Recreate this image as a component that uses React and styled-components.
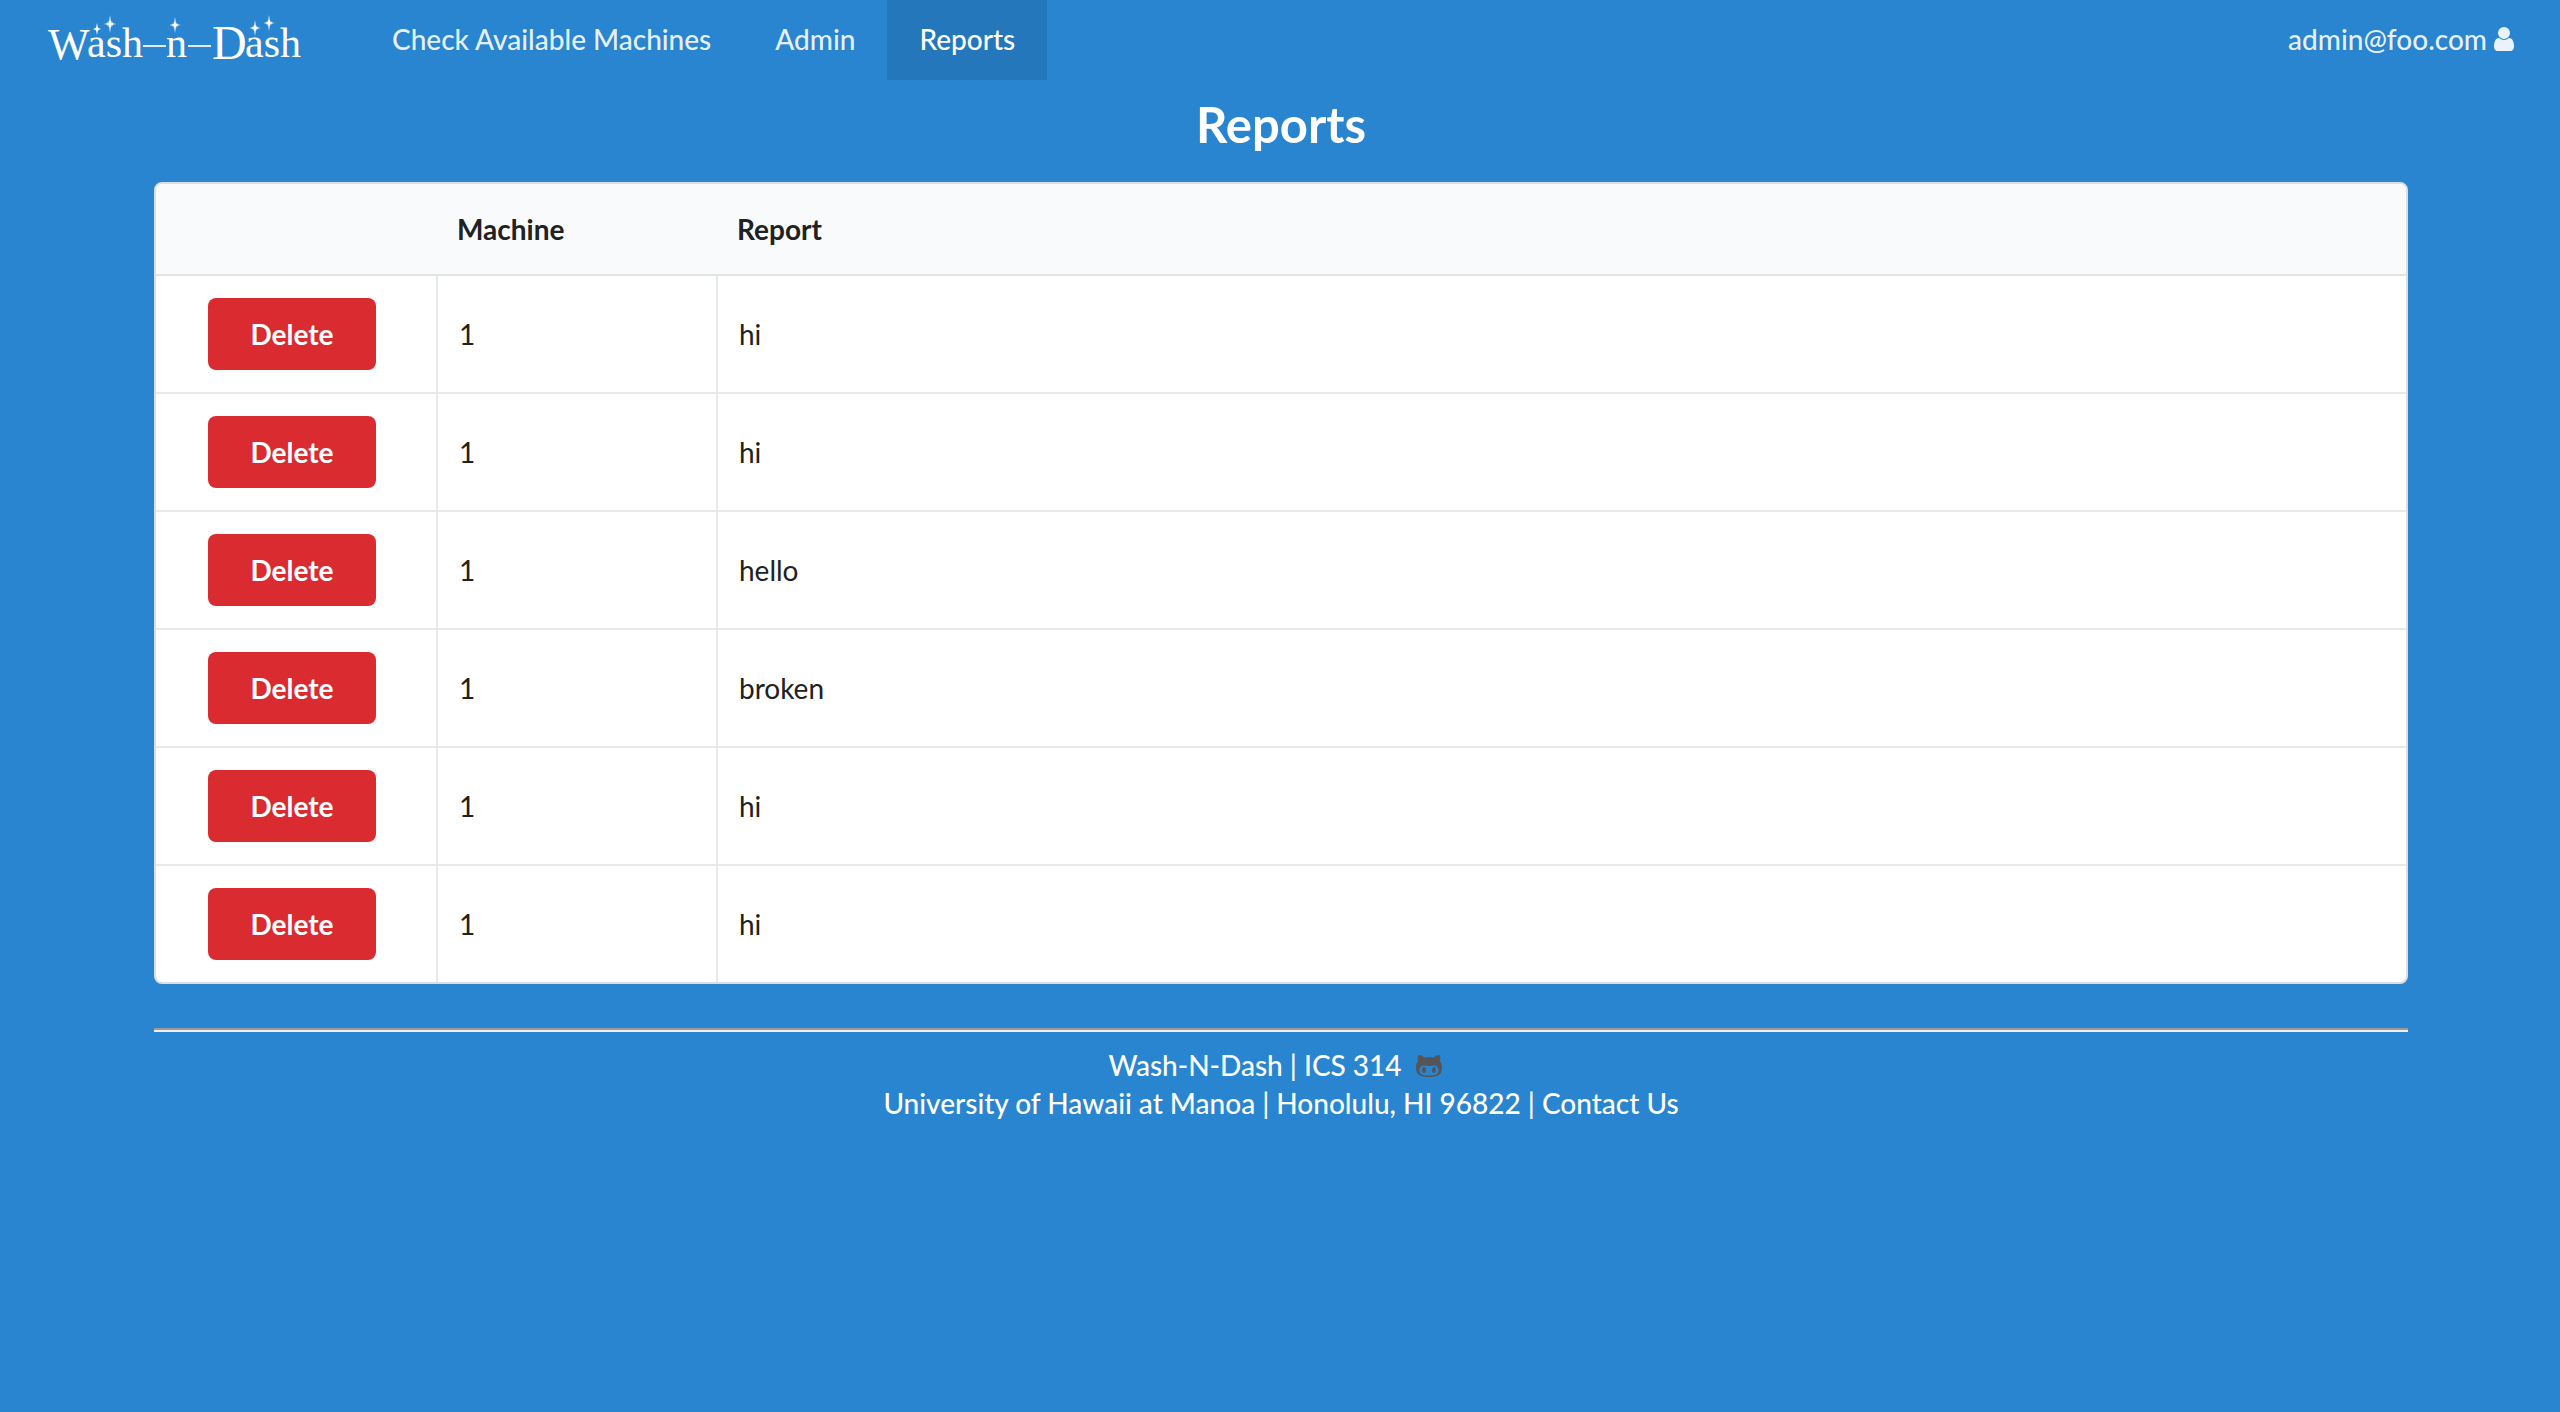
import React from "react";
import styled, { createGlobalStyle } from "styled-components";

const GlobalStyle = createGlobalStyle`
  *, *::before, *::after { box-sizing: border-box; }
  body {
    margin: 0;
    min-height: 100vh;
    background: #2985d0;
    color: #202122;
    font-family: Lato, "Liberation Sans", sans-serif;
    font-size: 28px;
    line-height: 40px;
  }
`;

const NavBar = styled.nav`
  display: flex;
  align-items: stretch;
  height: 80px;
  padding: 0 46px;
`;

const Brand = styled.a`
  display: flex;
  margin-right: 56px;
`;

const LogoSvg = styled.svg`
  display: block;
  width: 258px;
  height: 80px;
  fill: #fff;
`;

const LogoText = styled.text`
  font-family: "Liberation Serif", serif;
  font-size: 42px;
`;

const LogoCapital = styled.tspan`
  font-size: ${(p) => p.$size}px;
`;

const NavItem = styled.a`
  display: flex;
  align-items: center;
  padding: 0 32px 2px;
  color: ${(p) => (p.$active ? "#fff" : "rgba(255, 255, 255, 0.9)")};
  background: ${(p) => (p.$active ? "#2477bb" : "transparent")};
  font-weight: 500;
  text-decoration: none;
`;

const UserMenu = styled.button`
  display: flex;
  align-items: center;
  gap: 7px;
  margin-left: auto;
  padding: 0 0 2px;
  border: 0;
  background: none;
  color: rgba(255, 255, 255, 0.9);
  font: inherit;
  font-weight: 500;
  cursor: pointer;
`;

const Icon = styled.svg`
  display: block;
  width: ${(p) => p.$width}px;
  height: 28px;
  fill: currentColor;
`;

const Container = styled.div`
  padding: 0 152px 0 154px;
`;

const Title = styled.h1`
  margin: 0;
  padding: 14px 0 28px;
  color: #fff;
  font-size: 49px;
  line-height: 60px;
  text-align: center;
`;

const Table = styled.table`
  width: 100%;
  table-layout: fixed;
  border: 2px solid #dededf;
  border-radius: 8px;
  border-collapse: separate;
  border-spacing: 0;
  background: #fff;
  text-align: left;
`;

const HeadCell = styled.th`
  width: ${(p) => (p.$narrow ? "280px" : "auto")};
  height: 92px;
  padding: 0 21px;
  background: #f9fafb;
  border-bottom: 2px solid #e1e4e4;
  font-weight: 700;
  &:first-child { border-top-left-radius: 6px; }
  &:last-child { border-top-right-radius: 6px; }
`;

const Cell = styled.td`
  padding: 22px 21px;
  border-left: 2px solid #e7e8e8;
  &:first-child { border-left: 0; }
  tr:not(:last-child) > & { border-bottom: 2px solid #e7e8e8; }
`;

const ActionBox = styled.div`
  display: flex;
  justify-content: center;
  padding-right: 8px;
`;

const DeleteButton = styled.button`
  width: 168px;
  height: 72px;
  padding: 0;
  border: 0;
  border-radius: 8px;
  background: #da2b30;
  color: #fff;
  font: inherit;
  font-weight: 700;
  cursor: pointer;
`;

const Divider = styled.hr`
  margin: 44px 0 14px;
  border: 0;
  border-top: 2px solid #999;
  border-bottom: 2px solid #eee;
`;

const Footer = styled.footer`
  color: #fff;
  font-weight: 500;
  line-height: 38px;
`;

const FooterLine = styled.div`
  display: flex;
  align-items: center;
  justify-content: center;
`;

const FooterText = styled.span`
  white-space: pre;
`;

const FooterLink = styled.a`
  color: ${(p) => (p.$dark ? "#555" : "#fff")};
  margin: ${(p) => (p.$dark ? "0 12px 0 14px" : "0")};
  text-decoration: none;
`;

const reports = ["hi", "hi", "hello", "broken", "hi", "hi"];

const sparkles = [
  { x: 51, y: 29, r: 6 },
  { x: 64, y: 24, r: 9 },
  { x: 129, y: 25, r: 8 },
  { x: 209, y: 28, r: 8 },
  { x: 223, y: 23, r: 8 },
];

function Sparkle({ x, y, r }) {
  return (
    <g>
      <path
        d={`M${x} ${y - r}L${x + 1} ${y - 1}L${x + r * 0.7} ${y}L${x + 1} ${y + 1}L${x} ${y + r}L${x - 1} ${y + 1}L${x - r * 0.7} ${y}L${x - 1} ${y - 1}Z`}
      />
      <circle cx={x} cy={y} r={r * 0.35} opacity="0.5" />
    </g>
  );
}

function Logo() {
  return (
    <LogoSvg viewBox="0 0 258 80" role="img" aria-label="Wash-n-Dash">
      <LogoText>
        <LogoCapital $size={44} x="2" y="59">W</LogoCapital>
        <tspan x="41" y="57">ash</tspan>
        <tspan x="120" y="57">n</tspan>
        <LogoCapital $size={48} x="166" y="59">D</LogoCapital>
        <tspan x="199" y="57">ash</tspan>
      </LogoText>
      <rect x="97" y="45" width="23" height="2" opacity="0.85" />
      <rect x="142" y="45" width="23" height="2" opacity="0.85" />
      {sparkles.map((s) => (
        <Sparkle key={s.x} {...s} />
      ))}
    </LogoSvg>
  );
}

function UserIcon() {
  return (
    <Icon $width={20} viewBox="0 0 1280 1792" aria-hidden="true">
      <path d="M1280 1399q0 109-62.5 187t-150.5 78h-854q-88 0-150.5-78t-62.5-187q0-85 8.5-160.5t31.5-152 58.5-131 94-89 134.5-34.5q131 128 313 128t313-128q76 0 134.5 34.5t94 89 58.5 131 31.5 152 8.5 160.5zm-256-887q0 159-112.5 271.5t-271.5 112.5-271.5-112.5-112.5-271.5 112.5-271.5 271.5-112.5 271.5 112.5 112.5 271.5z" />
    </Icon>
  );
}

function GithubIcon() {
  return (
    <Icon $width={26} viewBox="0 0 1664 1792" aria-hidden="true">
      <path d="M640 1216q0 40-12.5 82t-43 76-72.5 34-72.5-34-43-76-12.5-82 12.5-82 43-76 72.5-34 72.5 34 43 76 12.5 82zm640 0q0 40-12.5 82t-43 76-72.5 34-72.5-34-43-76-12.5-82 12.5-82 43-76 72.5-34 72.5 34 43 76 12.5 82zm160 0q0-120-69-204t-187-84q-41 0-195 21-71 11-157 11t-157-11q-152-21-195-21-118 0-187 84t-69 204q0 88 32 153.5t81 103 122 60 140 29.5 149 7h168q82 0 149-7t140-29.5 122-60 81-103 32-153.5zm224-176q0 207-61 331-38 77-105.5 133t-141 86-170 47.5-171.5 22-167 4.5q-78 0-142-3t-147.5-12.5-152.5-30-137-51.5-121-81-86-115q-62-123-62-331 0-237 136-396-27-82-27-170 0-116 51-218 108 0 190 39.5t189 123.5q147-35 309-35 148 0 280 32 105-82 187-121t189-39q51 102 51 218 0 87-27 168 136 160 136 398z" />
    </Icon>
  );
}

export default function App() {
  return (
    <>
      <GlobalStyle />
      <NavBar>
        <Brand href="#home">
          <Logo />
        </Brand>
        <NavItem href="#machines">Check Available Machines</NavItem>
        <NavItem href="#admin">Admin</NavItem>
        <NavItem href="#reports" $active aria-current="page">Reports</NavItem>
        <UserMenu type="button">
          admin@foo.com
          <UserIcon />
        </UserMenu>
      </NavBar>
      <Container>
        <main>
          <Title>Reports</Title>
          <Table>
            <thead>
              <tr>
                <HeadCell $narrow aria-label="Actions" />
                <HeadCell $narrow scope="col">Machine</HeadCell>
                <HeadCell scope="col">Report</HeadCell>
              </tr>
            </thead>
            <tbody>
              {reports.map((report, i) => (
                <tr key={i}>
                  <Cell>
                    <ActionBox>
                      <DeleteButton type="button">Delete</DeleteButton>
                    </ActionBox>
                  </Cell>
                  <Cell>1</Cell>
                  <Cell>{report}</Cell>
                </tr>
              ))}
            </tbody>
          </Table>
        </main>
        <Divider />
        <Footer>
          <FooterLine>
            <FooterText>Wash-N-Dash | ICS 314</FooterText>
            <FooterLink $dark href="#github" aria-label="GitHub">
              <GithubIcon />
            </FooterLink>
          </FooterLine>
          <FooterLine>
            <FooterText>University of Hawaii at Manoa | Honolulu, HI 96822 | </FooterText>
            <FooterLink href="#contact">Contact Us</FooterLink>
          </FooterLine>
        </Footer>
      </Container>
    </>
  );
}
